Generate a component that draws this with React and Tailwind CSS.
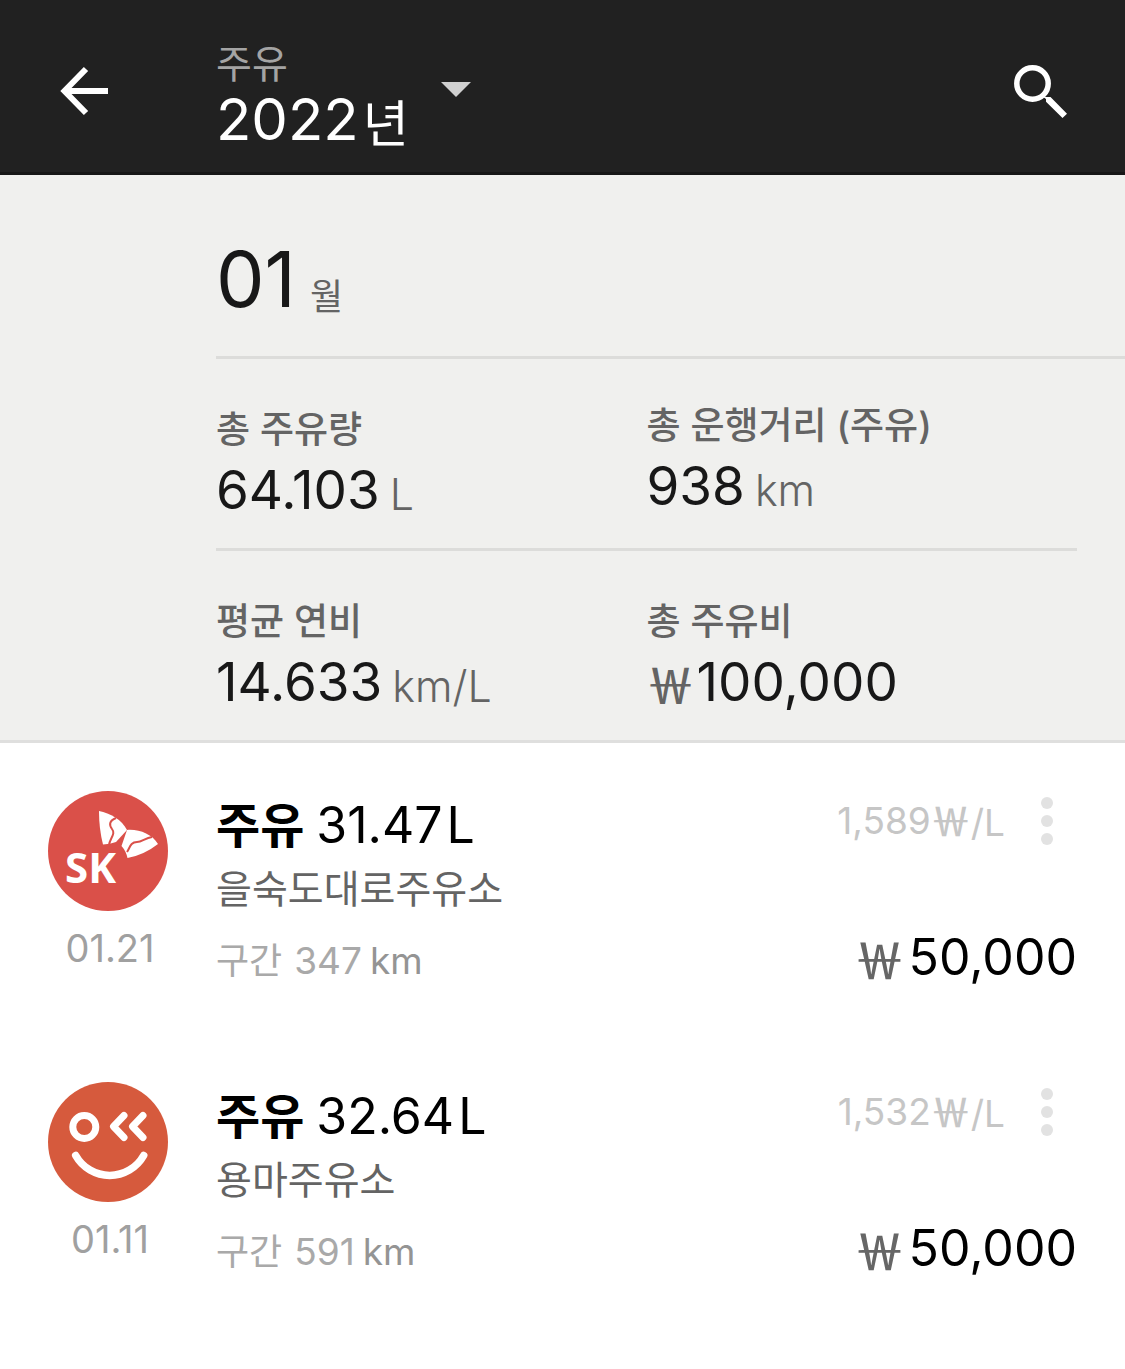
const stats = [
  { label: '총 주유량', value: '64.103', unit: 'L', place: 'pt-3' },
  { label: '총 운행거리 (주유)', value: '938', unit: 'km', place: 'pt-2' },
  { label: '평균 연비', value: '14.633', unit: 'km/L', place: 'pt-3' },
  { label: '총 주유비', value: '100,000', currency: '￦', place: 'pt-3' },
];

const records = [
  { date: '01.21', brand: 'sk', volume: '31.47', station: '을숙도대로주유소', distance: '347', price: '1,589', cost: '50,000' },
  { date: '01.11', brand: 'smile', volume: '32.64', station: '용마주유소', distance: '591', price: '1,532', cost: '50,000' },
];

function SkLogo() {
  return (
    <svg viewBox="0 0 120 120" className="size-[120px]" role="img" aria-label="SK">
      <circle cx="60" cy="60" r="60" fill="#da5049" />
      <path d="M51 20C62 22 74 29 79 39L68 51Q62 53 55 53.500Q51 38 51 20Z" fill="#fff" />
      <path d="M79 39C91 38 104 43 110 53Q96 64 79.500 67Q78 60 73.500 55Z" fill="#fff" />
      <path d="M68 27C61 30 61 34 64 38C68 43 62 47 61 54" fill="none" stroke="#da5049" strokeWidth="2" />
      <path d="M104 46C97 47 94 51 89 51C82 51 82 57 79 61" fill="none" stroke="#da5049" strokeWidth="2" />
      <text x="17" y="92" fill="#fff" fontSize="42" fontWeight="700" fontFamily="Open Sans, sans-serif">SK</text>
    </svg>
  );
}

function SmileLogo() {
  return (
    <svg viewBox="0 0 120 120" className="size-[120px]" role="img" aria-label="OK">
      <circle cx="60" cy="60" r="60" fill="#d65a3d" />
      <g fill="none" stroke="#fff" strokeWidth="7" strokeLinecap="round" strokeLinejoin="round">
        <circle cx="36.300" cy="45" r="11.500" />
        <path d="M76 33.500L65.500 44.500L76 55.500M95 33.500L84.500 44.500L95 55.500" />
        <path d="M27.700 73.500A39 39 0 0 0 95.700 73.500" strokeWidth="7.500" />
      </g>
    </svg>
  );
}

function Stat({ label, value, unit, currency, place }) {
  return (
    <div className={place}>
      <dt className="text-[37px] font-medium leading-[54px] text-[#646464]">{label}</dt>
      <dd className="flex items-end gap-2.5 text-[53px] leading-[66px] text-[#181818]">
        {currency && (
          <span className="-mr-2 font-['Noto_Sans_CJK_KR'] text-[48px] leading-[66px] font-medium text-[#646464]">
            {currency}
          </span>
        )}
        {value}
        {unit && <span className="text-[43px] font-light leading-[58px] text-[#646464]">{unit}</span>}
      </dd>
    </div>
  );
}

function Record({ item }) {
  return (
    <li className="flex h-[291px] px-12 pt-12">
      <div className="flex w-[120px] shrink-0 flex-col items-center">
        {item.brand === 'sk' ? <SkLogo /> : <SmileLogo />}
        <time className="mt-2 ml-1 text-[38px] leading-[58px] text-[#a0a0a0]">{item.date}</time>
      </div>
      <div className="ml-12 grow">
        <h3 className="flex items-baseline text-[50px] leading-[68px] text-black">
          <span className="text-[48px] font-bold">주유</span>
          <span className="ml-3">{item.volume}</span>
          <span className="ml-1">L</span>
        </h3>
        <p className="text-[39px] leading-[58px] text-[#646464]">{item.station}</p>
        <p className="mt-3.5 flex items-baseline text-[37px] leading-[58px] text-[#a9a9a9]">
          <span className="text-[36px]">구간</span>
          <span className="ml-3">{item.distance}</span>
          <span className="ml-2 text-[#949494]">km</span>
        </p>
      </div>
      <div className="flex flex-col items-end">
        <div className="flex h-[60px] items-center">
          <span className="flex items-end text-[37px] leading-[58px] text-[#c6c6c6]">
            {item.price}
            <span className="flex items-baseline leading-[54px]">
              <span className="font-['Noto_Sans_CJK_KR'] text-[40px] font-medium">￦</span>
              /L
            </span>
          </span>
          <button type="button" aria-label="더보기" className="ml-3 flex w-15 flex-col items-center gap-[6px]">
            <span className="size-3 rounded-full bg-[#e2e2e2]" />
            <span className="size-3 rounded-full bg-[#e2e2e2]" />
            <span className="size-3 rounded-full bg-[#e2e2e2]" />
          </button>
        </div>
        <div className="mt-[74px] flex items-end gap-1 text-[50px] leading-[64px] text-black">
          <span className="font-['Noto_Sans_CJK_KR'] text-[50px] leading-[64px] font-medium text-[#666]">￦</span>
          {item.cost}
        </div>
      </div>
    </li>
  );
}

export default function App() {
  return (
    <main className="min-h-screen bg-white font-['Inter','Noto_Sans_CJK_KR',sans-serif]">
      <header className="flex h-[175px] items-center border-b-3 border-[#171717] bg-[#212121] px-12 text-white">
        <button type="button" aria-label="뒤로" className="size-[72px]">
          <svg viewBox="0 0 72 72" className="size-[72px]" fill="none" stroke="#fff" strokeWidth="6">
            <path d="M60 41H17M38 19L16.500 41L38 63" />
          </svg>
        </button>
        <button type="button" className="ml-24 flex items-center text-left">
          <span className="block pt-4">
            <span className="block text-[39px] leading-[50px] text-[#a4a4a4]">주유</span>
            <span className="flex items-end text-[58px] leading-[60px]">
              2022<span className="ml-1 text-[50px] leading-[50px]">년</span>
            </span>
          </span>
          <svg viewBox="0 0 30 15" className="mt-1.5 ml-8 h-[15px] w-[30px]" fill="#d0d0d0">
            <path d="M0 0H30L15 15Z" />
          </svg>
        </button>
        <button type="button" aria-label="검색" className="ml-auto size-[72px]">
          <svg viewBox="0 0 72 72" className="size-[72px]">
            <circle cx="27.500" cy="33.500" r="15.700" fill="none" stroke="#fff" strokeWidth="5.500" />
            <path d="M38 45L40.500 47H45.500L62 63.700L57.500 68L41 51.700V49L37.500 46.500Z" fill="#fff" />
          </svg>
        </button>
      </header>

      <section className="border-b-3 border-[#dfdfde] bg-[#f0f0ee] pl-[216px]">
        <h2 className="flex h-[184px] items-end gap-3.5 border-b-3 border-[#dcdcda] pb-8 text-[77px] leading-[90px] text-[#181818]">
          01<span className="text-[36px] leading-[54px] text-[#646464]">월</span>
        </h2>
        <dl className="mr-12 grid grid-cols-2">
          {stats.map((s, i) => (
            <div key={s.label} className={i < 2 ? 'h-48 border-b-3 border-[#dcdcda] pt-8' : 'h-[189px] pt-8'}>
              <Stat {...s} />
            </div>
          ))}
        </dl>
      </section>

      <ul>
        {records.map((r) => (
          <Record key={r.date} item={r} />
        ))}
      </ul>
    </main>
  );
}
